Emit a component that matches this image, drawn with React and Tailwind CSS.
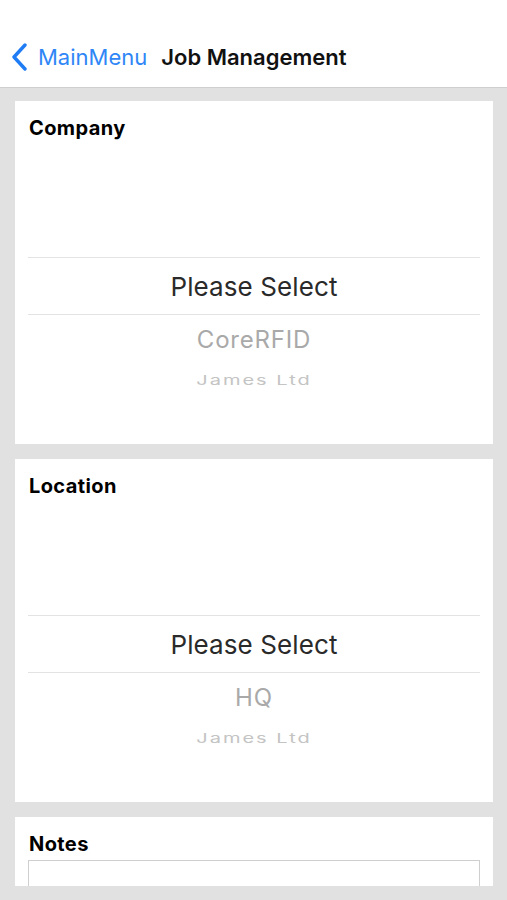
import React from "react";

const font = { fontFamily: "Inter, 'Noto Sans', sans-serif" };

const PickerCard = ({ title, first, second }) => (
  <div className="bg-white flex flex-col px-[13px] pt-[15px] h-[343px] shrink-0">
    <h2 className="text-[20px] leading-[24px] font-bold text-black pl-[1px] tracking-[0.4px]">{title}</h2>
    <div className="h-[117px]" />
    <div className="border-t border-b border-[#e3e3e3] h-[58px] flex items-center justify-center">
      <span className="text-[26px] text-[#2a2a2a] tracking-[0.1px]">Please Select</span>
    </div>
    <div className="h-[50px] flex items-center justify-center">
      <span className="text-[24px] text-[#a9a9a9] tracking-[0.8px]">{first}</span>
    </div>
    <div className="h-[30px] flex items-center justify-center">
      <span className="text-[20px] text-[#c4c4c4] tracking-[2px] scale-y-[0.66] inline-block">{second}</span>
    </div>
  </div>
);

export default function App() {
  return (
    <div className="w-[507px] h-[900px] bg-[#e1e1e1] flex flex-col overflow-hidden" style={font}>
      {/* Nav bar */}
      <div className="h-[88px] bg-white border-b border-[#cfcfcf] flex items-end pb-[17px] pl-[11px] shrink-0">
        <svg width="18" height="28" viewBox="0 0 18 28" className="mr-[9px] mb-[-1px]">
          <path d="M14 2 L3 14 L14 26" fill="none" stroke="#1f7cf4" strokeWidth="3.4" strokeLinecap="round" strokeLinejoin="round" />
        </svg>
        <span className="text-[22px] leading-[26px] text-[#2f86f6] mr-[14px]">MainMenu</span>
        <span className="text-[22px] leading-[26px] font-semibold text-[#111]">Job Management</span>
      </div>

      {/* Scroll content */}
      <div className="h-[798px] overflow-hidden flex flex-col gap-[15px] pt-[13px] pl-[15px] pr-[14px] shrink-0">
        <PickerCard title="Company" first="CoreRFID" second="James Ltd" />
        <PickerCard title="Location" first="HQ" second="James Ltd" />
        <div className="bg-white flex flex-col px-[13px] pt-[15px] h-[200px] shrink-0">
          <h2 className="text-[20px] leading-[24px] font-bold text-black pl-[1px] tracking-[0.4px]">Notes</h2>
          <div className="mt-[4px] h-[120px] border border-[#cfcfcf]" />
        </div>
      </div>
    </div>
  );
}
